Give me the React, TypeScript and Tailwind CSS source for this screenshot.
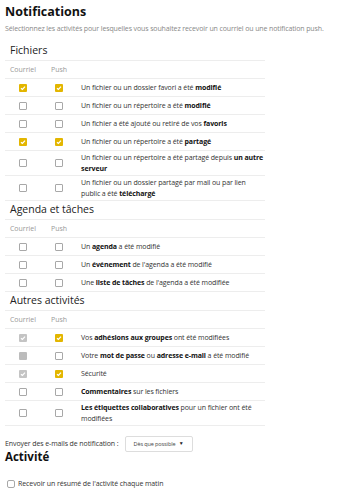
import React from "react";

type CB = "on" | "off" | "dis-on" | "dis-off";

function Box({ s }: { s: CB }) {
  if (s === "on")
    return (
      <span className="flex h-[8px] w-[8px] items-center justify-center rounded-[1px] bg-[#e3b600]">
        <svg width="6" height="6" viewBox="0 0 6 6"><path d="M1 3.2 L2.4 4.5 L5 1.6" stroke="white" strokeWidth="1.2" fill="none" /></svg>
      </span>
    );
  if (s === "dis-on")
    return (
      <span className="flex h-[8px] w-[8px] items-center justify-center rounded-[1px] bg-[#c4c4c4]">
        <svg width="6" height="6" viewBox="0 0 6 6"><path d="M1 3.2 L2.4 4.5 L5 1.6" stroke="white" strokeWidth="1.2" fill="none" /></svg>
      </span>
    );
  if (s === "dis-off") return <span className="block h-[8px] w-[8px] rounded-[1px] bg-[#bcbcbc]" />;
  return <span className="block h-[8px] w-[8px] rounded-[1px] border border-[#a8a8a8] bg-white" />;
}

type Row = { a: CB; b: CB; t: React.ReactNode; two?: boolean };

function Section({ title, rows }: { title: string; rows: Row[] }) {
  return (
    <div className="w-[260px]">
      <div className="flex h-[19px] items-center border-b border-[#ededed] pl-[5px] text-[10.5px] text-[#222]">{title}</div>
      <div className="flex h-[18px] items-center border-b border-[#ededed] pt-[1px] text-[7px] text-[#999]">
        <div className="w-[36px] text-center">Courriel</div>
        <div className="w-[36px] text-center">Push</div>
      </div>
      {rows.map((r, i) => (
        <div key={i} className={`flex items-center border-b border-[#ededed] ${r.two ? "h-[25px]" : "h-[18px]"}`}>
          <div className="flex w-[36px] justify-center"><Box s={r.a} /></div>
          <div className="flex w-[36px] justify-center"><Box s={r.b} /></div>
          <div className="flex-1 whitespace-nowrap pl-[4px] text-[7px] leading-[11px] tracking-[-0.1px] text-[#333]">{r.t}</div>
        </div>
      ))}
    </div>
  );
}

const B = ({ children }: { children: React.ReactNode }) => <b className="font-bold text-[#111]">{children}</b>;

export default function App() {
  return (
    <div className="h-[500px] w-[339px] overflow-hidden bg-white px-[5px] pt-[4px]" style={{ fontFamily: '"Open Sans", "Noto Sans", sans-serif' }}>
      <div className="text-[12.5px] font-bold leading-[16px] text-[#111]">Notifications</div>
      <div className="mt-[3px] whitespace-nowrap text-[7px] leading-[12px] tracking-[-0.12px] text-[#888]">
        Sélectionnez les activités pour lesquelles vous souhaitez recevoir un courriel ou une notification push.
      </div>
      <div className="mt-[7px]">
        <Section
          title="Fichiers"
          rows={[
            { a: "on", b: "on", t: <>Un fichier ou un dossier favori a été <B>modifié</B></> },
            { a: "off", b: "off", t: <>Un fichier ou un répertoire a été <B>modifié</B></> },
            { a: "off", b: "off", t: <>Un fichier a été ajouté ou retiré de vos <B>favoris</B></> },
            { a: "on", b: "on", t: <>Un fichier ou un répertoire a été <B>partagé</B></> },
            { a: "off", b: "off", two: true, t: <>Un fichier ou un répertoire a été partagé depuis <B>un autre</B><br /><B>serveur</B></> },
            { a: "off", b: "off", two: true, t: <>Un fichier ou un dossier partagé par mail ou par lien<br />public a été <B>téléchargé</B></> },
          ]}
        />
        <Section
          title="Agenda et tâches"
          rows={[
            { a: "off", b: "off", t: <>Un <B>agenda</B> a été modifié</> },
            { a: "off", b: "off", t: <>Un <B>événement</B> de l'agenda a été modifié</> },
            { a: "off", b: "off", t: <>Une <B>liste de tâches</B> de l'agenda a été modifiée</> },
          ]}
        />
        <Section
          title="Autres activités"
          rows={[
            { a: "dis-on", b: "on", t: <>Vos <B>adhésions aux groupes</B> ont été modifiées</> },
            { a: "dis-off", b: "off", t: <>Votre <B>mot de passe</B> ou <B>adresse e-mail</B> a été modifié</> },
            { a: "dis-on", b: "on", t: <>Sécurité</> },
            { a: "off", b: "off", t: <><B>Commentaires</B> sur les fichiers</> },
            { a: "off", b: "off", two: true, t: <><B>Les étiquettes collaboratives</B> pour un fichier ont été<br />modifiées</> },
          ]}
        />
      </div>
      <div className="mt-[10px] flex items-center gap-[6px] text-[7px] tracking-[-0.1px] text-[#333]">
        <span>Envoyer des e-mails de notification :</span>
        <span className="flex h-[16px] w-[68px] items-center justify-between rounded-[2px] border border-[#ddd] px-[8px] text-[5.5px] text-[#444]">
          <span>Dès que possible</span>
          <span className="text-[5px] text-[#222]">▼</span>
        </span>
      </div>
      <div className="mt-[-2px] text-[11.5px] font-bold leading-[14px] text-[#111]">Activité</div>
      <div className="mt-[15px] flex items-center gap-[3px] pl-[2px] text-[7px] tracking-[-0.1px] text-[#333]">
        <span className="block h-[8px] w-[8px] rounded-[2px] border border-[#a8a8a8]" />
        <span>Recevoir un résumé de l'activité chaque matin</span>
      </div>
    </div>
  );
}
